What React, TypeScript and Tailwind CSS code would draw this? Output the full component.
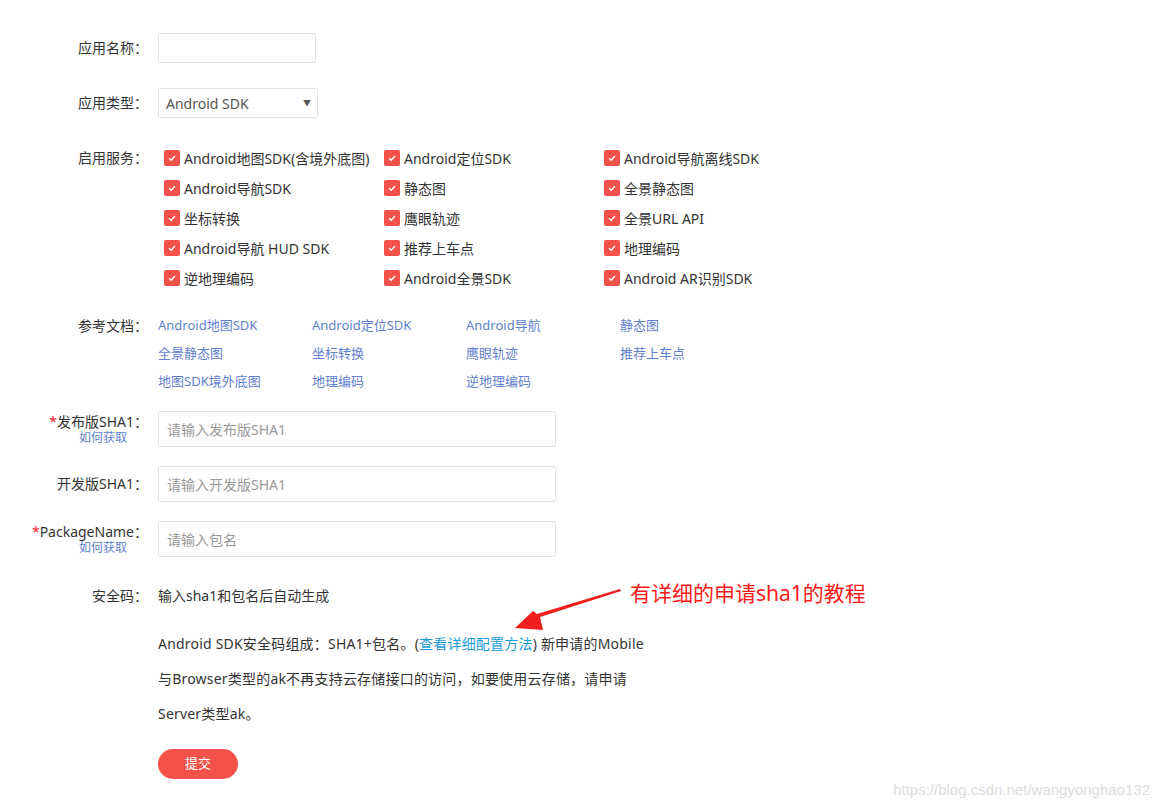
import React from "react";

const services = [
  ["Android地图SDK(含境外底图)", "Android定位SDK", "Android导航离线SDK"],
  ["Android导航SDK", "静态图", "全景静态图"],
  ["坐标转换", "鹰眼轨迹", "全景URL API"],
  ["Android导航 HUD SDK", "推荐上车点", "地理编码"],
  ["逆地理编码", "Android全景SDK", "Android AR识别SDK"],
];

const docs = [
  ["Android地图SDK", "Android定位SDK", "Android导航", "静态图"],
  ["全景静态图", "坐标转换", "鹰眼轨迹", "推荐上车点"],
  ["地图SDK境外底图", "地理编码", "逆地理编码"],
];

const font = { fontFamily: '"Noto Sans", "Noto Sans CJK SC", sans-serif' };

function Check() {
  return (
    <span className="flex h-[16px] w-[16px] shrink-0 items-center justify-center rounded-[2px] bg-[#f4514a]">
      <svg width="10" height="10" viewBox="0 0 10 10">
        <path d="M2 5.2 L4.2 7.2 L8 3" fill="none" stroke="#fff" strokeWidth="1.4" />
      </svg>
    </span>
  );
}

function Label({ text, star, sub }: { text: string; star?: boolean; sub?: boolean }) {
  return (
    <div className="w-[148px] shrink-0 text-right text-[14px] text-[#333]">
      <div className="leading-[18px]">
        {star && <span className="text-[#f5222d]">*</span>}
        {text}：
      </div>
      {sub && <div className="pr-[21px] text-[12px] leading-[14px] text-[#5f7fcf]">如何获取</div>}
    </div>
  );
}

function TextInput({ placeholder }: { placeholder: string }) {
  return (
    <input
      placeholder={placeholder}
      className="ml-[10px] h-[36px] w-[398px] rounded-[2px] border border-[#dfe3ea] px-[8px] text-[14px] text-[#333] outline-none placeholder:text-[#999]"
      style={font}
    />
  );
}

export default function App() {
  return (
    <div className="relative min-h-[807px] w-full bg-white pt-[33px]" style={font}>
      <div className="flex h-[30px] items-center">
        <Label text="应用名称" />
        <input className="ml-[10px] h-[30px] w-[158px] rounded-[2px] border border-[#dfe3ea] outline-none" />
      </div>

      <div className="mt-[25px] flex h-[30px] items-center">
        <Label text="应用类型" />
        <div className="ml-[10px] flex h-[30px] w-[160px] items-center justify-between rounded-[2px] border border-[#dfe3ea] pl-[7px] pr-[6px] text-[14px] text-[#555]">
          <span>Android SDK</span>
          <span className="text-[8px] text-[#555]">▼</span>
        </div>
      </div>

      <div className="mt-[25px] flex">
        <div className="flex h-[30px] items-center">
          <Label text="启用服务" />
        </div>
        <div className="ml-[16px] flex flex-col">
          {services.map((row, i) => (
            <div key={i} className="grid h-[30px] grid-cols-[220px_220px_220px] items-center">
              {row.map((s) => (
                <div key={s} className="flex items-center gap-[4px] text-[14px] text-[#333]">
                  <Check />
                  <span>{s}</span>
                </div>
              ))}
            </div>
          ))}
        </div>
      </div>

      <div className="mt-[19px] flex">
        <div className="flex h-[28px] items-center">
          <Label text="参考文档" />
        </div>
        <div className="ml-[10px] flex flex-col">
          {docs.map((row, i) => (
            <div key={i} className="grid h-[28px] grid-cols-[154px_154px_154px_154px] items-center">
              {row.map((d) => (
                <span key={d} className="text-[13px] text-[#5f7fcf]">{d}</span>
              ))}
            </div>
          ))}
        </div>
      </div>

      <div className="mt-[15px] flex items-center">
        <Label text="发布版SHA1" star sub />
        <TextInput placeholder="请输入发布版SHA1" />
      </div>
      <div className="mt-[19px] flex items-center">
        <Label text="开发版SHA1" />
        <TextInput placeholder="请输入开发版SHA1" />
      </div>
      <div className="mt-[19px] flex items-center">
        <Label text="PackageName" star sub />
        <TextInput placeholder="请输入包名" />
      </div>

      <div className="mt-[28px] flex h-[20px] items-center text-[14px] text-[#333]">
        <span className="ml-[92px] w-[66px]">安全码：</span>
        <span>输入sha1和包名后自动生成</span>
      </div>

      <div className="ml-[158px] mt-[21px] w-[520px] text-[14px] leading-[35px] tracking-[0.2px] text-[#333]">
        <div>
          Android SDK安全码组成：SHA1+包名。(<span className="text-[#1a9ad9]">查看详细配置方法</span>) 新申请的Mobile
        </div>
        <div>与Browser类型的ak不再支持云存储接口的访问，如要使用云存储，请申请</div>
        <div>Server类型ak。</div>
      </div>

      <button className="ml-[158px] mt-[18px] h-[30px] w-[80px] rounded-full bg-[#f4514a] text-[13px] text-white">
        提交
      </button>

      <div className="absolute left-[630px] top-[579px] text-[21px] leading-[28px] text-[#ff1a1a]">
        有详细的申请sha1的教程
      </div>
      <svg className="absolute left-[510px] top-[585px]" width="115" height="50" viewBox="510 585 115 50">
        <polygon points="620,589 621,591 540,617 543,630 515,628 533,611 537,614" fill="#f21d1d" />
      </svg>

      <div
        className="absolute right-[9px] top-[779px] text-[15px] text-[#dcdcdc]"
        style={{ fontFamily: '"Liberation Sans", Arial, sans-serif' }}
      >
        https://blog.csdn.net/wangyonghao132
      </div>
    </div>
  );
}
